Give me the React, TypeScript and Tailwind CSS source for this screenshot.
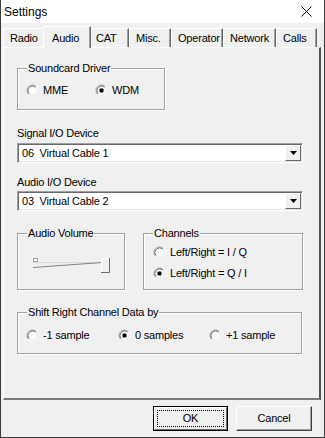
import React from 'react';

const tabs = [
  { label: 'Radio', w: 42 },
  { label: 'Audio', w: 44, active: true },
  { label: 'CAT', w: 40 },
  { label: 'Misc.', w: 42 },
  { label: 'Operator', w: 52 },
  { label: 'Network', w: 53 },
  { label: 'Calls', w: 41 },
];

const Radio = ({ checked, label }: { checked?: boolean; label: string }) => (
  <div className="flex items-center h-[13px]">
    <svg width="13" height="13" viewBox="0 0 13 13" className="shrink-0">
      <circle cx="6.5" cy="6.5" r="5" fill="#ffffff" />
      <path d="M2.61 10.39 A5.5 5.5 0 0 1 10.39 2.61" fill="none" stroke="#a0a0a0" />
      <path d="M3.32 9.68 A4.5 4.5 0 0 1 9.68 3.32" fill="none" stroke="#696969" />
      <path d="M10.39 2.61 A5.5 5.5 0 0 1 2.61 10.39" fill="none" stroke="#ffffff" />
      <path d="M9.68 3.32 A4.5 4.5 0 0 1 3.32 9.68" fill="none" stroke="#e3e3e3" />
      {checked && <rect x="4.5" y="4.5" width="4" height="4" rx="1" fill="#000000" />}
    </svg>
    <span className="ml-[4px] whitespace-nowrap">{label}</span>
  </div>
);

const Group = ({ title, className, children }: any) => (
  <div className={`relative border border-[#a0a0a0] shadow-[inset_1px_1px_0_#ffffff,1px_1px_0_#ffffff] ${className}`}>
    <span className="absolute left-[9px] top-[-7px] px-[1px] bg-[#f0f0f0] leading-[13px]">{title}</span>
    {children}
  </div>
);

const Combo = ({ value }: { value: string }) => (
  <div className="flex h-[20px] w-[286px] bg-white border-t border-l border-[#a0a0a0] border-r border-b border-r-white border-b-white shadow-[inset_1px_1px_0_#696969,inset_-1px_-1px_0_#e3e3e3]">
    <div className="flex-1 flex items-center pl-[4px] whitespace-pre">{value}</div>
    <div className="m-[1px] w-[16px] flex items-center justify-center bg-[#f0f0f0] border-t border-l border-white border-r border-b border-r-[#696969] border-b-[#696969]">
      <svg width="7" height="4" viewBox="0 0 7 4">
        <path d="M0 0 H7 L3.5 4 Z" fill="#000000" />
      </svg>
    </div>
  </div>
);

const Slider = () => (
  <svg width="80" height="16" viewBox="0 0 80 16">
    <rect x="1.5" y="0.5" width="4" height="3" fill="#ffffff" stroke="#a0a0a0" />
    <line x1="1" y1="4.5" x2="70" y2="4.5" stroke="#d8d8d8" />
    <line x1="1" y1="9.5" x2="70" y2="4.5" stroke="#808080" />
    <rect x="69" y="0" width="9" height="15" fill="#f0f0f0" />
    <path d="M69.5 15 V0.5 H78" fill="none" stroke="#ffffff" />
    <path d="M69 14.5 H77.5 V0" fill="none" stroke="#696969" />
  </svg>
);

export default function App() {
  return (
    <div
      className="w-[325px] h-[438px] flex flex-col bg-[#f0f0f0] border-l border-r border-b border-[#3c3c3c] text-[11px] tracking-[-0.2px] text-black"
      style={{ fontFamily: '"Liberation Sans", Arial, sans-serif' }}
    >
      {/* title bar */}
      <div className="h-[23px] bg-white flex items-center justify-between pl-[3px] pr-[12px] shrink-0">
        <span className="text-[12px] tracking-normal">Settings</span>
        <svg width="11" height="11" viewBox="0 0 11 11">
          <path d="M0.5 0.5 L10.5 10.5 M10.5 0.5 L0.5 10.5" stroke="#000000" strokeWidth="1" />
        </svg>
      </div>

      {/* tabs */}
      <div className="ml-[2px] mt-[3px] h-[21px] flex items-end">
        {tabs.map((t) =>
          t.active ? (
            <div
              key={t.label}
              className="relative z-10 -mx-[2px] -mb-[1px] h-[22px] flex items-start pt-[3px] pl-[8px] bg-[#f0f0f0] border-t border-l border-white border-r border-r-[#696969] shadow-[inset_-1px_0_0_#a0a0a0]"
              style={{ width: t.w + 4 }}
            >
              {t.label}
            </div>
          ) : (
            <div
              key={t.label}
              className="h-[19px] flex items-center pl-[6px] border-t border-l border-white border-r border-r-[#696969] shadow-[inset_-1px_0_0_#a0a0a0]"
              style={{ width: t.w }}
            >
              {t.label}
            </div>
          )
        )}
      </div>

      {/* panel */}
      <div className="ml-[2px] w-[318px] h-[353px] flex flex-col pl-[13px] border-t border-l border-white border-r-2 border-b-2 border-r-[#505050] border-b-[#7a7a7a]">
        <Group title="Soundcard Driver" className="mt-[20px] w-[148px] h-[42px] flex pt-[15px] pl-[8px]">
          <div className="w-[69px]"><Radio label="MME" /></div>
          <Radio label="WDM" checked />
        </Group>

        <div className="mt-[17px] h-[13px] leading-[13px]">Signal I/O Device</div>
        <div className="mt-[3px]"><Combo value="06  Virtual Cable 1" /></div>

        <div className="mt-[13px] h-[13px] leading-[13px]">Audio I/O Device</div>
        <div className="mt-[2px]"><Combo value="03  Virtual Cable 2" /></div>

        <div className="mt-[22px] flex gap-[18px]">
          <Group title="Audio Volume" className="w-[108px] h-[57px] pl-[14px] pt-[24px]">
            <Slider />
          </Group>
          <Group title="Channels" className="w-[160px] h-[57px] flex flex-col gap-[8px] pt-[12px] pl-[9px]">
            <Radio label="Left/Right = I / Q" />
            <Radio label="Left/Right = Q / I" checked />
          </Group>
        </div>

        <Group title="Shift Right Channel Data by" className="mt-[22px] w-[285px] h-[42px] flex pt-[16px] pl-[8px]">
          <div className="w-[92px]"><Radio label="-1 sample" /></div>
          <div className="w-[91px]"><Radio label="0 samples" checked /></div>
          <Radio label="+1 sample" />
        </Group>
      </div>

      {/* buttons */}
      <div className="mt-[6px] flex justify-end gap-[8px] pr-[12px]">
        <button className="w-[75px] h-[25px] border border-black p-0 bg-[#f0f0f0]">
          <div className="h-full w-full border-t border-l border-white border-r border-b border-r-[#696969] border-b-[#696969] p-[2px]">
            <div className="h-full w-full flex items-center justify-center border border-dotted border-black">OK</div>
          </div>
        </button>
        <button className="w-[76px] h-[25px] flex items-center justify-center bg-[#f0f0f0] border-t border-l border-white border-r border-b border-r-[#404040] border-b-[#404040] shadow-[inset_-1px_-1px_0_#a0a0a0]">
          Cancel
        </button>
      </div>
    </div>
  );
}
